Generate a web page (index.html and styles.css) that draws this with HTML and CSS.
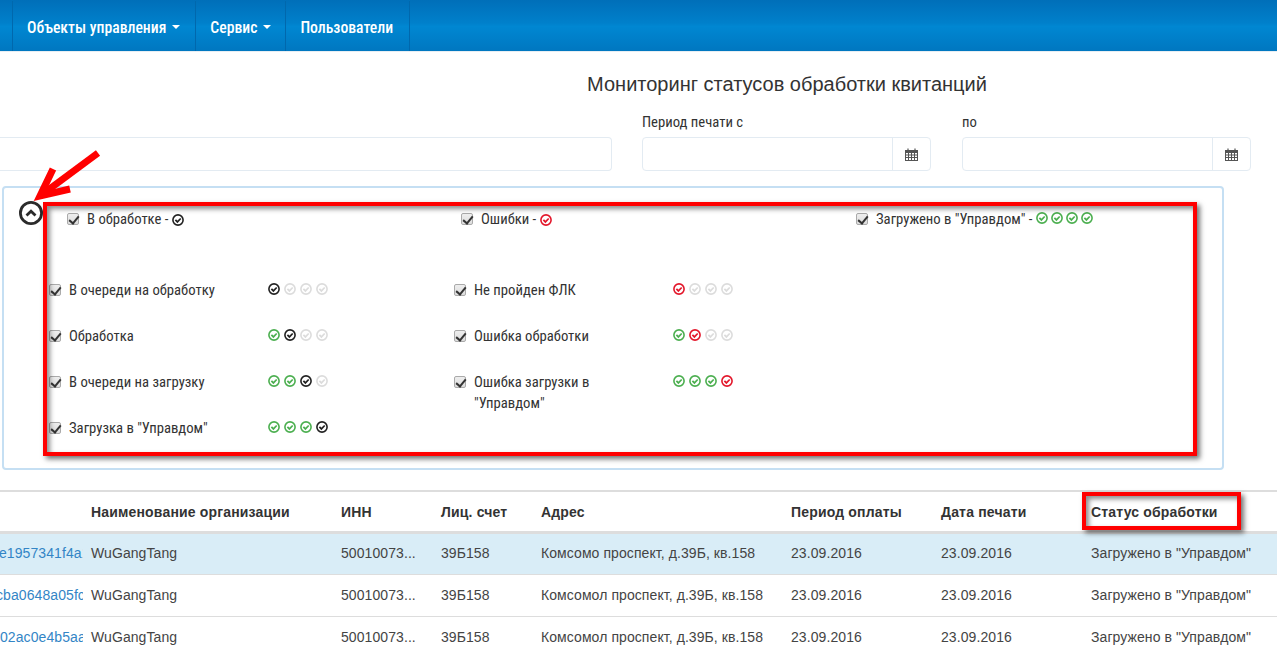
FILE: index.html
```html
<!DOCTYPE html>
<html lang="ru">
<head>
<meta charset="utf-8">
<title>Мониторинг статусов обработки квитанций</title>
<link rel="stylesheet" href="styles.css">
</head>
<body>
<svg class="defs" width="0" height="0" aria-hidden="true">
  <symbol id="chk" viewBox="0 0 12 12">
    <circle cx="6" cy="6" r="5.1" fill="none" stroke="currentColor" stroke-width="1.6"/>
    <path d="M3.4 5.8 5.4 7.9 8.7 4.5" fill="none" stroke="currentColor" stroke-width="1.7"/>
  </symbol>
  <symbol id="cal" viewBox="0 0 13 13">
    <path fill="currentColor" d="M0 2h2.4V.5h1.2V2h5.8V.5h1.2V2H13v11H0zM1 5v1.5h2V5zm3 0v1.5h2V5zm3 0v1.5h2V5zm3 0v1.5h2V5zM1 7.5V9h2V7.5zm3 0V9h2V7.5zm3 0V9h2V7.5zm3 0V9h2V7.5zM1 10v2h2v-2zm3 0v2h2v-2zm3 0v2h2v-2zm3 0v2h2v-2z"/>
  </symbol>
</svg>
<nav class="nav">
  <a class="nav-item">Объекты управления <i class="caret"></i></a>
  <a class="nav-item">Сервис <i class="caret"></i></a>
  <a class="nav-item">Пользователи</a>
</nav>
<main class="main">
  <h1 class="title">Мониторинг статусов обработки квитанций</h1>
  <div class="filters">
    <div class="field field-wide"><div class="input"></div></div>
    <div class="field field-from">
      <label class="field-label">Период печати с</label>
      <div class="input"><span class="addon"><svg class="cal"><use href="#cal"/></svg></span></div>
    </div>
    <div class="field field-to">
      <label class="field-label">по</label>
      <div class="input"><span class="addon"><svg class="cal"><use href="#cal"/></svg></span></div>
    </div>
  </div>
  <section class="panel">
    <button class="toggle" type="button"><svg viewBox="0 0 26 26" width="26" height="26"><circle cx="13" cy="13" r="10.6" fill="none" stroke="#2b2b2b" stroke-width="2.8"/><path d="M8.5 15.5 13 11.2 17.5 15.5" fill="none" stroke="#2b2b2b" stroke-width="2.8"/></svg></button>
    <div class="legend">
      <div class="groups">
        <label class="check"><input type="checkbox" checked><span>В обработке - <svg class="st k"><use href="#chk"/></svg></span></label>
        <label class="check"><input type="checkbox" checked><span>Ошибки - <svg class="st r"><use href="#chk"/></svg></span></label>
        <label class="check"><input type="checkbox" checked><span>Загружено в "Управдом" - <span class="icons-inline"><svg class="st g"><use href="#chk"/></svg><svg class="st g"><use href="#chk"/></svg><svg class="st g"><use href="#chk"/></svg><svg class="st g"><use href="#chk"/></svg></span></span></label>
      </div>
      <div class="states">
        <div class="state"><label class="check"><input type="checkbox" checked><span>В очереди на обработку</span></label><div class="icons"><svg class="st k"><use href="#chk"/></svg><svg class="st n"><use href="#chk"/></svg><svg class="st n"><use href="#chk"/></svg><svg class="st n"><use href="#chk"/></svg></div></div>
        <div class="state"><label class="check"><input type="checkbox" checked><span>Не пройден ФЛК</span></label><div class="icons"><svg class="st r"><use href="#chk"/></svg><svg class="st n"><use href="#chk"/></svg><svg class="st n"><use href="#chk"/></svg><svg class="st n"><use href="#chk"/></svg></div></div>
        <div class="state"><label class="check"><input type="checkbox" checked><span>Обработка</span></label><div class="icons"><svg class="st g"><use href="#chk"/></svg><svg class="st k"><use href="#chk"/></svg><svg class="st n"><use href="#chk"/></svg><svg class="st n"><use href="#chk"/></svg></div></div>
        <div class="state"><label class="check"><input type="checkbox" checked><span>Ошибка обработки</span></label><div class="icons"><svg class="st g"><use href="#chk"/></svg><svg class="st r"><use href="#chk"/></svg><svg class="st n"><use href="#chk"/></svg><svg class="st n"><use href="#chk"/></svg></div></div>
        <div class="state"><label class="check"><input type="checkbox" checked><span>В очереди на загрузку</span></label><div class="icons"><svg class="st g"><use href="#chk"/></svg><svg class="st g"><use href="#chk"/></svg><svg class="st k"><use href="#chk"/></svg><svg class="st n"><use href="#chk"/></svg></div></div>
        <div class="state"><label class="check"><input type="checkbox" checked><span>Ошибка загрузки в<br>"Управдом"</span></label><div class="icons"><svg class="st g"><use href="#chk"/></svg><svg class="st g"><use href="#chk"/></svg><svg class="st g"><use href="#chk"/></svg><svg class="st r"><use href="#chk"/></svg></div></div>
        <div class="state"><label class="check"><input type="checkbox" checked><span>Загрузка в "Управдом"</span></label><div class="icons"><svg class="st g"><use href="#chk"/></svg><svg class="st g"><use href="#chk"/></svg><svg class="st g"><use href="#chk"/></svg><svg class="st k"><use href="#chk"/></svg></div></div>
      </div>
    </div>
  </section>
  <table class="grid">
    <colgroup><col class="c1"><col class="c2"><col class="c3"><col class="c3"><col class="c2"><col class="c4"><col class="c4"><col class="c5"></colgroup>
    <thead>
      <tr><th></th><th>Наименование организации</th><th>ИНН</th><th>Лиц. счет</th><th>Адрес</th><th>Период оплаты</th><th>Дата печати</th><th>Статус обработки</th></tr>
    </thead>
    <tbody>
      <tr class="active"><td class="link ind1">e1957341f4a1</td><td>WuGangTang</td><td>50010073...</td><td>39Б158</td><td>Комсомо проспект, д.39Б, кв.158</td><td>23.09.2016</td><td>23.09.2016</td><td>Загружено в "Управдом"</td></tr>
      <tr><td class="link ind2">cba0648a05fc</td><td>WuGangTang</td><td>50010073...</td><td>39Б158</td><td>Комсомол проспект, д.39Б, кв.158</td><td>23.09.2016</td><td>23.09.2016</td><td>Загружено в "Управдом"</td></tr>
      <tr><td class="link">02ac0e4b5aa</td><td>WuGangTang</td><td>50010073...</td><td>39Б158</td><td>Комсомол проспект, д.39Б, кв.158</td><td>23.09.2016</td><td>23.09.2016</td><td>Загружено в "Управдом"</td></tr>
    </tbody>
  </table>
</main>
<div class="mark mark-panel"></div>
<div class="mark mark-col"></div>
<svg class="arrow" viewBox="0 0 80 60" width="80" height="60" aria-hidden="true">
  <path d="M77 3 19 46" fill="none" stroke="#f00" stroke-width="7"/>
  <path d="M32 19 19 46 49 39" fill="none" stroke="#f00" stroke-width="7"/>
</svg>
</body>
</html>
```
FILE: styles.css
```css
* { box-sizing: border-box; }
html, body { margin: 0; padding: 0; height: 658px; overflow: hidden; background: #fff; }
body { font-family: "Liberation Sans", Arial, sans-serif; font-size: 14px; color: #333; position: relative; }
.defs { position: absolute; }

.nav {
  display: flex; height: 52px; padding: 1px 0 0 12px;
  background: linear-gradient(#006fb9 0, #0080cb 45%, #0087d2 52%, #0077c0 100%);
  border-bottom: 1px solid #e8eef3;
}
.nav-item {
  display: flex; align-items: center; gap: 5px; padding: 2px 14px 0;
  color: #fff; font-family: Roboto, sans-serif; font-stretch: 75%; font-size: 15.7px; font-weight: 500;
  border-left: 1px solid #0068ad;
}
.nav-item:first-child { padding-right: 15px; }
.nav-item:last-child { border-right: 1px solid #0068ad; padding-right: 16px; }
.caret { width: 0; height: 0; border: 4px solid transparent; border-top-color: #fff; border-bottom: 0; margin-left: 1px; }

.title { margin: 20px 0 0; padding-left: 297px; text-align: center; font-family: "Liberation Sans", sans-serif; font-size: 20px; font-weight: 400; line-height: 24px; color: #333; }

.filters { display: flex; margin-top: 17px; align-items: flex-end; }
.field { width: 289px; }
.field-wide { width: 612px; }
.field-from { margin-left: 30px; }
.field-to { margin-left: 31px; }
.field-label { display: block; height: 19px; line-height: 19px; margin-bottom: 5px; font-family: Roboto, sans-serif; font-stretch: 75%; font-size: 14.7px; font-weight: 400; color: #333; }
.input { height: 34px; border: 1px solid #e3ebf2; border-radius: 4px; display: flex; justify-content: flex-end; }
.field-wide .input { border-left: 0; border-radius: 0 4px 4px 0; }
.addon { width: 38px; border-left: 1px solid #e3ebf2; display: flex; align-items: center; justify-content: center; }
.cal { width: 13px; height: 13px; color: #555; }

.panel { display: flex; height: 284px; margin: 15px 53px 0 2px; border: 2px solid #c5dff3; border-radius: 4px; }
.toggle { width: 26px; height: 26px; margin: 12px 5px 0 14px; padding: 0; border: 0; background: none; flex: none; }
.legend { flex: 1; padding-top: 21px; }
.check { display: flex; align-items: flex-start; gap: 8px; font-family: Roboto, sans-serif; font-stretch: 75%; font-size: 14.7px; line-height: 21px; color: #333; }
.check input {
  appearance: none; flex: none; position: relative; width: 12px; height: 12px; margin: 4px 0 0;
  border: 1px solid #aaa; border-radius: 2px; background: linear-gradient(#eee, #ddd);
}
.check input::after {
  content: ""; position: absolute; left: 3px; top: 0; width: 4px; height: 8px;
  border: solid #333; border-width: 0 2px 2px 0; transform: rotate(40deg);
}
.groups { display: grid; grid-template-columns: 394px 395px 340px; padding-left: 18px; height: 21px; }
.st { width: 12px; height: 12px; display: inline-block; vertical-align: -1.5px; }
.st.k { color: #222; }
.st.g { color: #4caf50; }
.st.r { color: #e3172b; }
.st.n { color: #dcdcdc; }
.icons-inline { display: inline-flex; gap: 3px; }
.states { display: grid; grid-template-columns: 405px 405px; grid-auto-rows: 46px; margin-top: 50px; }
.state { display: flex; align-items: flex-start; }
.state .check { width: 219px; }
.icons { display: flex; gap: 4px; padding-top: 3px; }

.grid { table-layout: fixed; border-collapse: collapse; width: 1277px; margin: 20px 0 0; }
.c1 { width: 83px; }
.c2 { width: 250px; }
.c3 { width: 100px; }
.c4 { width: 150px; }
.c5 { width: 194px; }
.grid th { height: 41px; padding: 1px 8px 0; text-align: left; font-size: 14px; font-weight: 700; letter-spacing: .17px; border-top: 2px solid #ddd; border-bottom: 3px solid #ddd; white-space: nowrap; overflow: hidden; }
.grid td { height: 42px; padding: 0 8px; border-bottom: 1px solid #ddd; white-space: nowrap; overflow: hidden; font-size: 14px; letter-spacing: .08px; color: #444; }
.grid .active td { background: #d9edf7; padding-bottom: 2px; }
.grid td.link { color: #3385c6; padding-left: 0; padding-right: 0; }
.grid td.ind1 { text-indent: -1px; }
.grid td.ind2 { text-indent: -4px; }

.mark { position: absolute; border: 4px solid #f00; box-shadow: 3px 3px 5px rgba(0,0,0,.55), inset 3px 3px 5px rgba(0,0,0,.45); }
.mark-panel { left: 43px; top: 202px; width: 1154px; height: 254px; }
.mark-col { left: 1082px; top: 492px; width: 159px; height: 38px; }
.arrow { position: absolute; left: 21px; top: 150px; }
```
